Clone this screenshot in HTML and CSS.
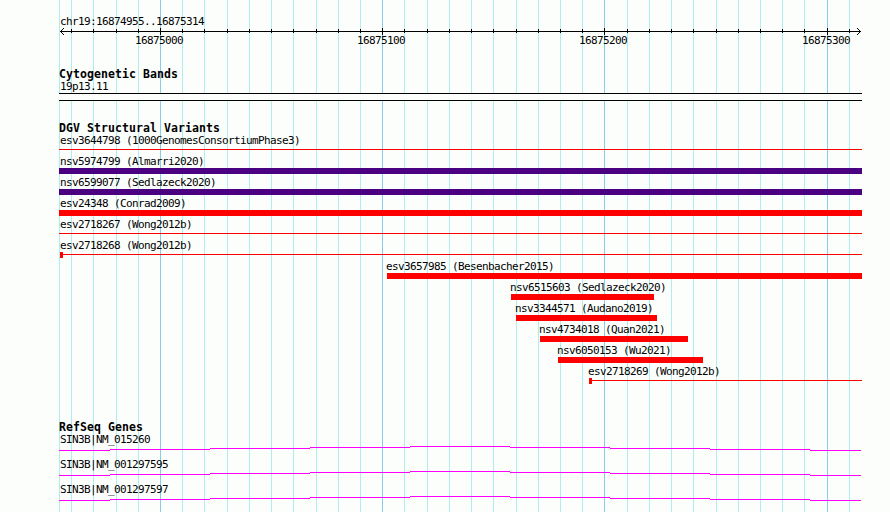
FILE: index.html
```html
<!DOCTYPE html>
<html lang="en">
<head>
<meta charset="utf-8">
<title>chr19:16874955..16875314</title>
<link rel="stylesheet" href="styles.css">
</head>
<body>
<main class="browser">
  <svg class="grid" width="890" height="512" aria-hidden="true">
    <path class="minor" d="M59.5 0V512M71.5 0V512M93.5 0V512M116.5 0V512M138.5 0V512M182.5 0V512M204.5 0V512M227.5 0V512M249.5 0V512M271.5 0V512M293.5 0V512M316.5 0V512M338.5 0V512M360.5 0V512M404.5 0V512M427.5 0V512M449.5 0V512M471.5 0V512M493.5 0V512M516.5 0V512M538.5 0V512M560.5 0V512M582.5 0V512M627.5 0V512M649.5 0V512M671.5 0V512M693.5 0V512M716.5 0V512M738.5 0V512M760.5 0V512M782.5 0V512M804.5 0V512M849.5 0V512"/>
    <path class="major" d="M160.5 0V512M382.5 0V512M604.5 0V512M827.5 0V512"/>
  </svg>

  <section class="ruler">
    <div class="label">chr19:16874955..16875314</div>
    <svg class="axis" width="890" height="22" viewBox="0 28 890 22">
      <path d="M60 31.5H861M63.5 28V29M62.5 29V30M61.5 30V31M61.5 32V33M62.5 33V34M63.5 34V35M857.5 28V29M858.5 29V30M859.5 30V31M859.5 32V33M858.5 33V34M857.5 34V35"/>
      <path d="M71.5 29V33M93.5 29V33M116.5 29V33M138.5 29V33M182.5 29V33M204.5 29V33M227.5 29V33M249.5 29V33M271.5 29V33M293.5 29V33M316.5 29V33M338.5 29V33M360.5 29V33M404.5 29V33M427.5 29V33M449.5 29V33M471.5 29V33M493.5 29V33M516.5 29V33M538.5 29V33M560.5 29V33M582.5 29V33M627.5 29V33M649.5 29V33M671.5 29V33M693.5 29V33M716.5 29V33M738.5 29V33M760.5 29V33M782.5 29V33M804.5 29V33M849.5 29V33"/>
      <path d="M160.5 28V35M382.5 28V35M604.5 28V35M827.5 28V35"/>
      <text x="135" y="44">16875000</text>
      <text x="357" y="44">16875100</text>
      <text x="579" y="44">16875200</text>
      <text x="802" y="44">16875300</text>
    </svg>
  </section>

  <section class="track cytobands">
    <h2>Cytogenetic Bands</h2>
    <div class="label">19p13.11</div>
    <div class="band"></div>
  </section>

  <section class="track variants">
    <h2>DGV Structural Variants</h2>
    <div class="row"><div class="label">esv3644798 (1000GenomesConsortiumPhase3)</div><div class="line"></div></div>
    <div class="row"><div class="label">nsv5974799 (Almarri2020)</div><div class="bar complex"></div></div>
    <div class="row"><div class="label">nsv6599077 (Sedlazeck2020)</div><div class="bar complex"></div></div>
    <div class="row"><div class="label">esv24348 (Conrad2009)</div><div class="bar"></div></div>
    <div class="row"><div class="label">esv2718267 (Wong2012b)</div><div class="line"></div></div>
    <div class="row"><div class="label">esv2718268 (Wong2012b)</div><div class="line capped edge"></div></div>
    <div class="row inner" style="margin-left:328px"><div class="label">esv3657985 (Besenbacher2015)</div><div class="bar"></div></div>
    <div class="row inner" style="margin-left:452px"><div class="label">nsv6515603 (Sedlazeck2020)</div><div class="bar" style="width:143px"></div></div>
    <div class="row inner" style="margin-left:457px"><div class="label">nsv3344571 (Audano2019)</div><div class="bar" style="width:141px"></div></div>
    <div class="row inner" style="margin-left:481px"><div class="label">nsv4734018 (Quan2021)</div><div class="bar" style="width:148px"></div></div>
    <div class="row inner" style="margin-left:499px"><div class="label">nsv6050153 (Wu2021)</div><div class="bar" style="width:145px"></div></div>
    <div class="row inner" style="margin-left:530px"><div class="label">esv2718269 (Wong2012b)</div><div class="line capped"></div></div>
  </section>

  <section class="track genes">
    <h2>RefSeq Genes</h2>
    <div class="gene"><div class="label">SIN3B|NM_015260</div>
      <svg width="803" height="5"><path d="M0 4.5H51M51 3.5H151M151 2.5H251M251 1.5H351M351 .5H451M451 1.5H551M551 2.5H651M651 3.5H751M751 4.5H802"/></svg></div>
    <div class="gene"><div class="label">SIN3B|NM_001297595</div>
      <svg width="803" height="5"><path d="M0 4.5H51M51 3.5H151M151 2.5H251M251 1.5H351M351 .5H451M451 1.5H551M551 2.5H651M651 3.5H751M751 4.5H802"/></svg></div>
    <div class="gene"><div class="label">SIN3B|NM_001297597</div>
      <svg width="803" height="5"><path d="M0 4.5H51M51 3.5H151M151 2.5H251M251 1.5H351M351 .5H451M451 1.5H551M551 2.5H651M651 3.5H751M751 4.5H802"/></svg></div>
  </section>
</main>
</body>
</html>
```

FILE: styles.css
```css
* { box-sizing: border-box; }
body {
  margin: 0;
  background: #fcfefc;
  color: #000;
  font: 11px/15px "DejaVu Sans Mono", monospace;
  letter-spacing: -0.622px;
}
.browser {
  position: relative;
  width: 890px;
  height: 512px;
  overflow: hidden;
}
svg { display: block; fill: none; }
.grid { position: absolute; top: 0; left: 0; z-index: -1; }
.minor { stroke: #afeeee; }
.major { stroke: #87ceeb; }

.label { height: 15px; padding: 1px 0 0 1px; white-space: nowrap; }
.ruler { height: 66px; padding-top: 13px; }
.ruler .label { padding-left: 60px; }
.axis { stroke: #000; }
.axis text { fill: #000; stroke: none; }

.track { width: 803px; margin-left: 59px; }
h2 {
  height: 12px;
  margin: 0;
  font-size: 11.5px;
  line-height: 17px;
  letter-spacing: 0.077px;
  white-space: nowrap;
}
.cytobands { height: 54px; }
.band {
  height: 8px;
  border: solid #000;
  border-width: 1px 0;
  background: #fcfefc;
}
.variants { height: 299px; }
.row { height: 21px; }
.inner .label { margin-left: -2px; }
.bar { height: 6px; background: #f00; }
.complex { background: #4b0082; }
.line {
  height: 6px;
  background: linear-gradient(#f00, #f00) 0 2px / 100% 1px no-repeat;
}
.capped { border-left: 3px solid #f00; }
.edge { margin-left: 1px; }
.gene { height: 25px; }
.gene svg { stroke: #f0f; }
```
